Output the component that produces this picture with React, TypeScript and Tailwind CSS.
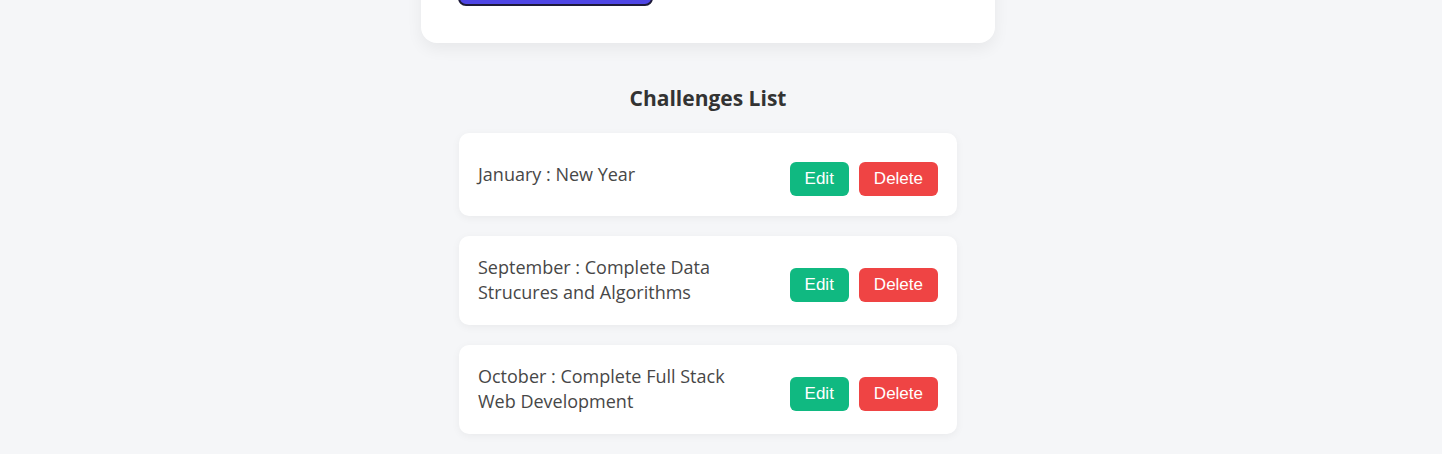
import React from 'react';

interface Challenge {
  id: number;
  month: string;
  title: string;
}

const challenges: Challenge[] = [
  { id: 1, month: 'January', title: 'New Year' },
  { id: 2, month: 'September', title: 'Complete Data Strucures and Algorithms' },
  { id: 3, month: 'October', title: 'Complete Full Stack Web Development' },
];

const ChallengeItem: React.FC<{ item: Challenge }> = ({ item }) => (
  <div className="flex items-center justify-between bg-white rounded-[10px] px-[19px] pt-[19px] pb-[20px] shadow-[0_2px_8px_rgba(0,0,0,0.05)]">
    <p className="w-[285px] text-[18px] leading-[25px] text-[#474747]">
      {item.month} : {item.title}
    </p>
    <div className="flex gap-[10px] mt-[10px]">
      <button className="h-[34px] px-[15px] rounded-[6px] bg-[#10b981] text-white text-[17px] font-['Liberation_Sans',Arial,sans-serif]">
        Edit
      </button>
      <button className="h-[34px] px-[15px] rounded-[6px] bg-[#ef4444] text-white text-[17px] font-['Liberation_Sans',Arial,sans-serif]">
        Delete
      </button>
    </div>
  </div>
);

const App: React.FC = () => {
  return (
    <div className="min-h-screen bg-[#f5f6f8] flex flex-col items-center pr-[26px] font-['Open_Sans','Noto_Sans',sans-serif] overflow-hidden">
      {/* Form card (scrolled partly out of view) */}
      <div className="w-[574px] mt-[-62px] bg-white rounded-2xl pt-[24px] px-[37px] pb-[37px] shadow-[0_6px_16px_rgba(0,0,0,0.06)]">
        <button className="block w-[195px] h-[44px] rounded-[8px] bg-[#4f46e5] border-2 border-[#1e1b3a]" />
      </div>

      <h2 className="mt-[42px] text-[21px] leading-[26px] font-bold text-[#333333]">Challenges List</h2>

      <div className="mt-[22px] w-[498px] flex flex-col gap-[20px]">
        {challenges.map(item => (
          <ChallengeItem key={item.id} item={item} />
        ))}
      </div>
    </div>
  );
};

export default App;
